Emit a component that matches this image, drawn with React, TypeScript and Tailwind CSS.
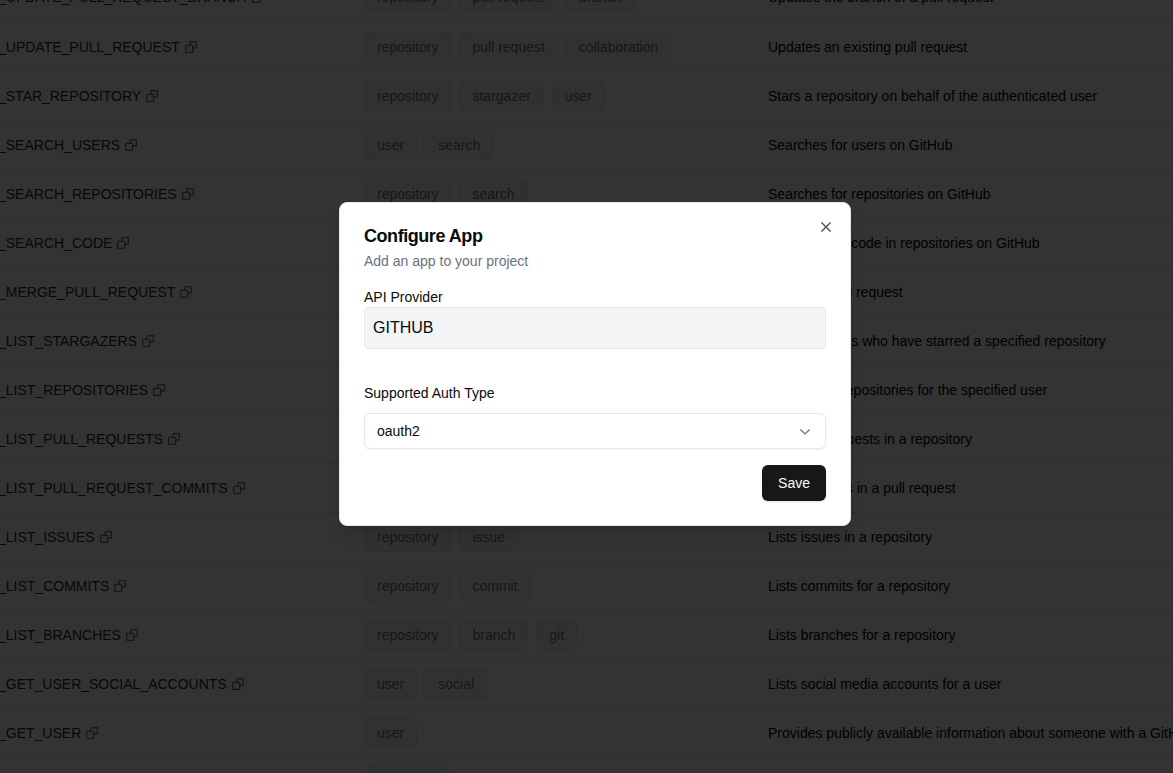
type Row = { name: string; tags: string[]; description: string };

const rows: Row[] = [
  { name: "_UPDATE_PULL_REQUEST_BRANCH", tags: ["repository", "pull request", "branch"], description: "Updates the branch of a pull request" },
  { name: "_UPDATE_PULL_REQUEST", tags: ["repository", "pull request", "collaboration"], description: "Updates an existing pull request" },
  { name: "_STAR_REPOSITORY", tags: ["repository", "stargazer", "user"], description: "Stars a repository on behalf of the authenticated user" },
  { name: "_SEARCH_USERS", tags: ["user", "search"], description: "Searches for users on GitHub" },
  { name: "_SEARCH_REPOSITORIES", tags: ["repository", "search"], description: "Searches for repositories on GitHub" },
  { name: "_SEARCH_CODE", tags: [], description: "Searches for code in repositories on GitHub" },
  { name: "_MERGE_PULL_REQUEST", tags: [], description: "Merges a pull request" },
  { name: "_LIST_STARGAZERS", tags: [], description: "Lists the users who have starred a specified repository" },
  { name: "_LIST_REPOSITORIES", tags: [], description: "Lists public repositories for the specified user" },
  { name: "_LIST_PULL_REQUESTS", tags: [], description: "Lists pull requests in a repository" },
  { name: "_LIST_PULL_REQUEST_COMMITS", tags: [], description: "Lists commits in a pull request" },
  { name: "_LIST_ISSUES", tags: ["repository", "issue"], description: "Lists issues in a repository" },
  { name: "_LIST_COMMITS", tags: ["repository", "commit"], description: "Lists commits for a repository" },
  { name: "_LIST_BRANCHES", tags: ["repository", "branch", "git"], description: "Lists branches for a repository" },
  { name: "_GET_USER_SOCIAL_ACCOUNTS", tags: ["user", "social"], description: "Lists social media accounts for a user" },
  { name: "_GET_USER", tags: ["user"], description: "Provides publicly available information about someone with a GitHub account" },
  { name: "_GET_REPOSITORY", tags: ["repository"], description: "Gets a repository" },
];

function CopyIcon() {
  return (
    <svg viewBox="0 0 12 12" className="size-3" fill="none" stroke="currentColor" strokeWidth="1.3" aria-hidden="true">
      <rect x="0.65" y="4.35" width="7" height="7" rx="0.6" />
      <path d="M5 4.35V1.2a.55.55 0 0 1 .55-.55h5.25a.55.55 0 0 1 .55.55v5.25a.55.55 0 0 1-.55.55H7.65" />
    </svg>
  );
}

function CloseIcon() {
  return (
    <svg
      viewBox="0 0 15 15"
      className="size-4"
      fill="currentColor"
      stroke="currentColor"
      strokeWidth="0.3"
      aria-hidden="true"
    >
      <path d="M11.7816 4.03157C12.0062 3.80702 12.0062 3.44295 11.7816 3.2184C11.5571 2.99385 11.193 2.99385 10.9685 3.2184L7.50005 6.68682L4.03164 3.2184C3.80708 2.99385 3.44301 2.99385 3.21846 3.2184C2.99391 3.44295 2.99391 3.80702 3.21846 4.03157L6.68688 7.49999L3.21846 10.9684C2.99391 11.193 2.99391 11.557 3.21846 11.7816C3.44301 12.0061 3.80708 12.0061 4.03164 11.7816L7.50005 8.31316L10.9685 11.7816C11.193 12.0061 11.5571 12.0061 11.7816 11.7816C12.0062 11.557 12.0062 11.193 11.7816 10.9684L8.31322 7.49999L11.7816 4.03157Z" />
    </svg>
  );
}

function ChevronIcon() {
  return (
    <svg
      viewBox="0 0 15 15"
      className="pointer-events-none absolute top-2.5 right-[13px] size-4 opacity-55"
      fill="currentColor"
      stroke="currentColor"
      strokeWidth="0.4"
      aria-hidden="true"
    >
      <path d="M3.13523 6.15803C3.3241 5.95657 3.64052 5.94637 3.84197 6.13523L7.5 9.56464L11.158 6.13523C11.3595 5.94637 11.6759 5.95657 11.8648 6.15803C12.0536 6.35949 12.0434 6.67591 11.842 6.86477L7.84197 10.6148C7.64964 10.7951 7.35036 10.7951 7.15803 10.6148L3.15803 6.86477C2.95657 6.67591 2.94637 6.35949 3.13523 6.15803Z" />
    </svg>
  );
}

function FunctionTable() {
  return (
    <table className="-mt-[27px] w-full table-fixed border-collapse text-sm">
      <colgroup>
        <col className="w-[356px]" />
        <col className="w-[404px]" />
        <col />
      </colgroup>
      <tbody>
        {rows.map((row) => (
          <tr key={row.name} className="h-[49px] border-b border-gray-200">
            <td className="p-0 text-gray-800">
              <div className="-ml-0.5 flex items-center gap-[5px] whitespace-nowrap">
                {row.name}
                <button type="button" aria-label="Copy name" className="text-gray-500">
                  <CopyIcon />
                </button>
              </div>
            </td>
            <td className="px-2 py-0">
              <div className="flex gap-2">
                {row.tags.map((tag) => (
                  <span key={tag} className="rounded-md border border-[#d8e8e4] bg-[#eef8f4] px-3 py-1 text-gray-500">
                    {tag}
                  </span>
                ))}
              </div>
            </td>
            <td className="overflow-hidden px-2 py-0 whitespace-nowrap text-black">{row.description}</td>
          </tr>
        ))}
      </tbody>
    </table>
  );
}

function ConfigureDialog() {
  return (
    <section
      role="dialog"
      aria-modal="true"
      aria-labelledby="dialog-title"
      className="relative w-full max-w-lg rounded-lg border border-gray-200 bg-white p-6 text-sm text-neutral-950 shadow-lg"
    >
      <h2 id="dialog-title" className="text-lg leading-[18px] font-semibold tracking-tight">
        Configure App
      </h2>
      <p className="mt-1.5 leading-5 text-gray-500">Add an app to your project</p>
      <form className="mt-4" onSubmit={(event) => event.preventDefault()}>
        <label htmlFor="provider" className="block leading-5">
          API Provider
        </label>
        <input
          id="provider"
          readOnly
          defaultValue="GITHUB"
          className="block w-full rounded border border-gray-200 bg-gray-100 p-2 text-base outline-none"
        />
        <label htmlFor="auth-type" className="mt-9 block leading-4">
          Supported Auth Type
        </label>
        <div className="relative mt-3">
          <select
            id="auth-type"
            className="block h-9 w-full appearance-none rounded-md border border-gray-200 bg-white px-3 shadow-xs outline-none"
          >
            <option>oauth2</option>
          </select>
          <ChevronIcon />
        </div>
        <div className="mt-4 flex justify-end">
          <button type="submit" className="h-9 rounded-md bg-neutral-900 px-4 text-neutral-50 shadow-sm">
            Save
          </button>
        </div>
      </form>
      <button type="button" aria-label="Close" className="absolute top-4 right-4 opacity-70">
        <CloseIcon />
      </button>
    </section>
  );
}

export default function App() {
  return (
    <main className="relative h-screen overflow-hidden bg-white font-['Liberation_Sans',Arial,sans-serif]">
      <div className="flow-root">
        <FunctionTable />
      </div>
      <div className="absolute inset-0 flex items-center justify-center bg-black/80 pt-4 pr-4 pb-[62px] pl-[33px]">
        <ConfigureDialog />
      </div>
    </main>
  );
}
